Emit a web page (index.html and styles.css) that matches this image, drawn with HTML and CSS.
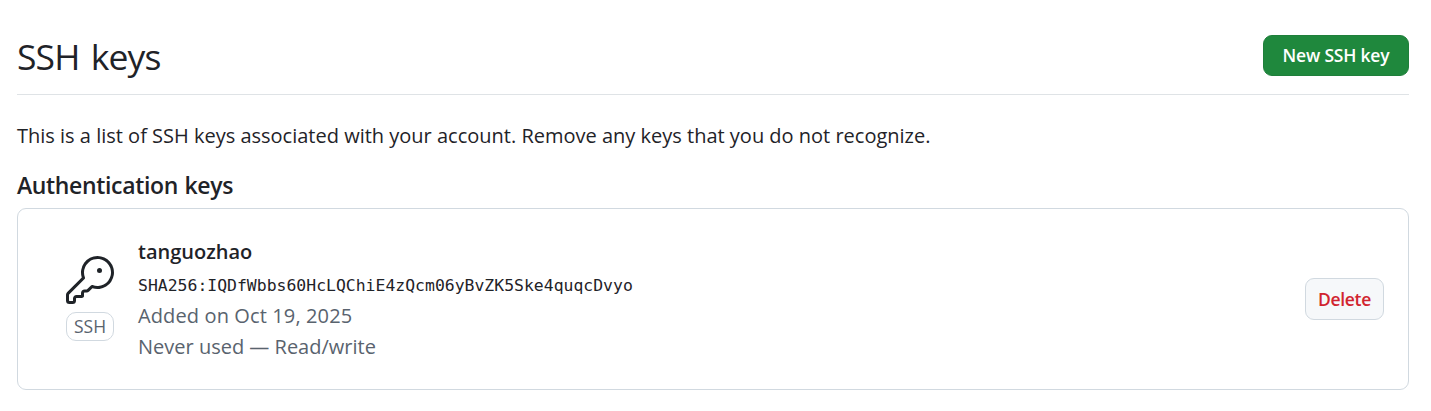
FILE: index.html
```html
<!DOCTYPE html>
<html lang="en">
<head>
<meta charset="utf-8">
<title>SSH keys</title>
<link rel="stylesheet" href="styles.css">
</head>
<body>
<main class="page">
  <header class="subhead">
    <h1 class="subhead-title">SSH keys</h1>
    <button class="btn btn-primary" type="button"><span>New SSH key</span></button>
  </header>
  <p class="intro">This is a list of SSH keys associated with your account. Remove any keys that you do not recognize.</p>
  <h2 class="section-title">Authentication keys</h2>
  <ul class="key-list">
    <li class="key-row">
      <div class="key-kind">
        <svg class="key-icon" viewBox="0 0 24 24" width="48" height="48" aria-hidden="true"><path d="M16.75 8.5a1.25 1.25 0 1 0 0-2.5 1.25 1.25 0 0 0 0 2.5Z"/><path d="M15.75 0a8.25 8.25 0 1 1-2.541 16.101l-1.636 1.636a1.744 1.744 0 0 1-1.237.513H9.25a.25.25 0 0 0-.25.25v1.448a.876.876 0 0 1-.256.619l-.214.213a.75.75 0 0 1-.545.22H5.25a.25.25 0 0 0-.25.25v1A1.75 1.75 0 0 1 3.25 24h-1.5A1.75 1.75 0 0 1 0 22.25v-2.836c0-.464.185-.908.513-1.236l7.386-7.388A8.249 8.249 0 0 1 15.75 0ZM9 8.25a6.733 6.733 0 0 0 .463 2.462.75.75 0 0 1-.168.804l-7.722 7.721a.25.25 0 0 0-.073.177v2.836c0 .138.112.25.25.25h1.5a.25.25 0 0 0 .25-.25v-1c0-.966.784-1.75 1.75-1.75H7.5v-1c0-.966.784-1.75 1.75-1.75h1.086a.25.25 0 0 0 .177-.073l1.971-1.972a.75.75 0 0 1 .804-.168A6.75 6.75 0 1 0 9 8.25Z"/></svg>
        <span class="label">SSH</span>
      </div>
      <div class="key-info">
        <strong class="key-name">tanguozhao</strong>
        <code class="fingerprint">SHA256:IQDfWbbs60HcLQChiE4zQcm06yBvZK5Ske4quqcDvyo</code>
        <span class="meta added">Added on Oct 19, 2025</span>
        <span class="meta usage">Never used — Read/write</span>
      </div>
      <button class="btn btn-danger" type="button"><span>Delete</span></button>
    </li>
  </ul>
</main>
</body>
</html>
```
FILE: styles.css
```css
* { box-sizing: border-box; }
body {
  margin: 0;
  background: #fff;
  color: #1f2328;
  font-family: "Open Sans", "Noto Sans", sans-serif;
  font-size: 20px;
}
.page { padding: 35px 22px 0 17px; }
.subhead {
  display: flex;
  justify-content: space-between;
  align-items: flex-start;
  height: 60px;
  border-bottom: 1px solid #dfe3e6;
}
.subhead-title {
  margin: 0;
  font-size: 35.5px;
  font-weight: 400;
  line-height: 43px;
  letter-spacing: -0.9px;
  word-spacing: 3px;
  white-space: nowrap;
}
.btn {
  display: flex;
  align-items: center;
  justify-content: center;
  padding: 0 0 1px;
  border: 1px solid;
  border-radius: 9px;
  font-family: inherit;
  font-size: 17.5px;
  font-weight: 600;
  white-space: nowrap;
}
.btn-primary {
  width: 146px;
  height: 41px;
  border-color: #1f7f3b;
  background: #1f883d;
  color: #fff;
  letter-spacing: -0.2px;
}
.btn-danger {
  width: 79px;
  height: 42px;
  margin-left: auto;
  border-color: #d1d9e0;
  background: #f6f8fa;
  color: #d1242f;
  letter-spacing: -0.3px;
}
.intro {
  margin: 25px 0 0;
  line-height: 32px;
  white-space: nowrap;
}
.section-title {
  margin: 17px 0 0;
  font-size: 23px;
  font-weight: 600;
  line-height: 32px;
  letter-spacing: -0.35px;
  word-spacing: 1px;
}
.key-list {
  margin: 7px 0 0;
  padding: 0;
  border: 1px solid #d1d9e0;
  border-radius: 9px;
  list-style: none;
}
.key-row {
  display: flex;
  align-items: center;
  height: 180px;
  padding: 0 24px 0 48px;
}
.key-kind {
  display: flex;
  flex-direction: column;
  gap: 8px;
  width: 48px;
  margin-right: 24px;
  padding-bottom: 2px;
}
.key-icon { display: block; fill: #1f2328; }
.label {
  height: 29px;
  border: 1px solid #d1d9e0;
  border-radius: 10px;
  color: #59636e;
  font-size: 17.5px;
  line-height: 27px;
  text-align: center;
}
.key-info {
  display: flex;
  flex-direction: column;
  white-space: nowrap;
}
.key-name { font-size: 20px; font-weight: 600; line-height: 32px; }
.fingerprint {
  padding-top: 4px;
  font-family: "DejaVu Sans Mono", monospace;
  font-size: 16.45px;
  line-height: 28px;
}
.meta { color: #59636e; line-height: 31px; }
.added { letter-spacing: 0.12px; }
```
